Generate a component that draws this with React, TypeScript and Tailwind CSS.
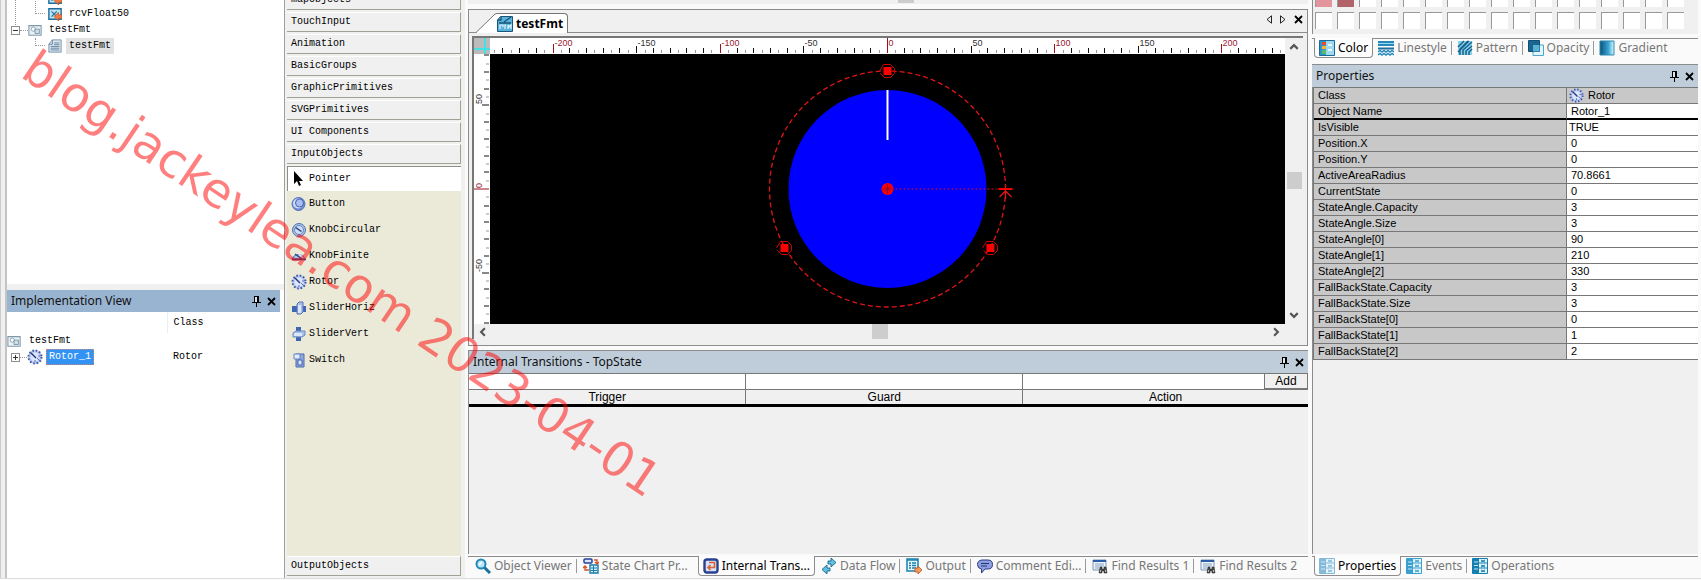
import { FC, ReactNode } from 'react';

interface IconProps {
  className?: string;
}

interface Tab {
  label: string;
  icon: ReactNode;
  active?: boolean;
  separator?: boolean;
}

const BitmapIcon: FC<IconProps & { children: ReactNode }> = ({ className = 'size-4', children }) => (
  <svg viewBox="0 0 16 16" className={`${className} shrink-0`} aria-hidden="true">
    {children}
  </svg>
);

const PinIcon = () => (
  <svg viewBox="0 0 9 11" className="h-[11px] w-[9px]" shapeRendering="crispEdges" aria-hidden="true">
    <path d="M2 0h5v6H2zM0 6h9v1H0zM4 7h1v4H4z" fill="#000" />
    <path d="M3 1h2v5H3z" fill="#dfe6ee" />
  </svg>
);

const CloseIcon = () => (
  <svg viewBox="0 0 9 9" className="size-[9px]" aria-hidden="true">
    <path d="M1 1l7 7M8 1l-7 7" stroke="#000" strokeWidth="1.8" />
  </svg>
);

const RotorIcon: FC<IconProps> = ({ className }) => (
  <BitmapIcon className={className}>
    <circle cx="8" cy="8" r="7" fill="#b9c8ee" />
    <circle cx="8" cy="8" r="6.5" fill="none" stroke="#3d55a4" strokeWidth="2" strokeDasharray="1.5 1.9" />
    <circle cx="8" cy="8" r="4.5" fill="#dce6fb" />
    <path d="M4 4l5 5" stroke="#22357e" strokeWidth="1.4" />
    <path d="M10 9l2 2M8 11v2M11 7h2" stroke="#5871bd" />
  </BitmapIcon>
);

const FormatIcon = () => (
  <BitmapIcon className="h-4 w-[14px]">
    <path d="M1 3h14v11H1z" fill="#e9f2f6" stroke="#7f99a9" strokeWidth="1.2" />
    <circle cx="6" cy="7" r="2.4" fill="#fff" stroke="#839eae" />
    <path d="M8 7h5v5H8z" fill="#cfe0e8" stroke="#7891a0" />
  </BitmapIcon>
);

const PageIcon = () => (
  <BitmapIcon className="h-4 w-[14px]">
    <path d="M5 1h10v14H1V6z" fill="#dbe6ef" stroke="#6e8aa3" />
    <path d="M1 6h4V1M3 8.500h10M3 10.500h10M3 12.500h10M7 4.500h6M7 6.500h6" fill="none" stroke="#5c7d9b" />
  </BitmapIcon>
);

const ReceiveIcon = () => (
  <BitmapIcon className="h-4 w-[14px]">
    <path d="M1 2h14v12H1z" fill="#bfe6f5" stroke="#1f6d9c" strokeWidth="1.6" />
    <path d="M4 5l6 6M10 5l-6 6" stroke="#1f6d9c" strokeWidth="1.4" />
    <path d="M7 11l5-5v3h4v4h-4v3z" fill="#ef7d42" stroke="#b4441a" strokeWidth=".7" />
  </BitmapIcon>
);

const PointerIcon = () => (
  <BitmapIcon>
    <path d="M3 0v13l3-3 2 5 2-1-2-4h4z" fill="#000" />
  </BitmapIcon>
);

const PushButtonIcon = () => (
  <BitmapIcon>
    <circle cx="7.500" cy="8" r="6.500" fill="#6d8bd0" stroke="#5672b8" />
    <circle cx="7" cy="7.500" r="5" fill="#cfdcf8" />
    <circle cx="8.500" cy="7" r="4" fill="#a9bfef" stroke="#4763b4" />
  </BitmapIcon>
);

const KnobCircularIcon = () => (
  <BitmapIcon>
    <circle cx="8" cy="8" r="6.500" fill="#a9c4ea" stroke="#4f74b4" />
    <circle cx="8" cy="8" r="4.500" fill="#cfdef6" stroke="#6688c3" />
    <path d="M4.500 5.500l6 4" stroke="#23407f" strokeWidth="1.5" />
  </BitmapIcon>
);

const KnobFiniteIcon = () => (
  <BitmapIcon>
    <path d="M1 11a7 7 0 0 1 13 0z" fill="#a8c3e9" stroke="#4f74b4" />
    <path d="M4 6l7 5M1 11.500h14" stroke="#2a4a8e" strokeWidth="1.4" />
    <path d="M8 6l4 4" stroke="#e4edfb" strokeWidth="1.5" />
  </BitmapIcon>
);

const SliderHorizIcon = () => (
  <BitmapIcon>
    <path d="M1 6h5v6H1zM12 6h3v6h-3z" fill="#3f66b0" />
    <path d="M6 4l2-2h4v10l-2 2H6z" fill="#a9c0ea" stroke="#5573b4" />
    <path d="M7 5h3v8H7z" fill="#dbe6f9" />
  </BitmapIcon>
);

const SliderVertIcon = () => (
  <BitmapIcon>
    <path d="M5 1h5v5H5zM5 11h5v4H5z" fill="#3f66b0" />
    <path d="M2 7l3-2h9v4l-3 2H2z" fill="#a9c0ea" stroke="#6a86c2" />
    <path d="M3 7h8v3H3z" fill="#dbe6f9" />
  </BitmapIcon>
);

const SwitchIcon = () => (
  <BitmapIcon>
    <path d="M5 2h8v13H5z" fill="#8da9de" stroke="#4c69ae" />
    <path d="M3 2h6v5H3z" fill="#e4ebfa" stroke="#6682c0" />
    <path d="M7 8h4v5H7z" fill="#dbe5f8" stroke="#4661a6" />
  </BitmapIcon>
);

const EditorIcon = () => (
  <BitmapIcon>
    <path d="M3.500.5h12v15H.5V4z" fill="#57b3dc" stroke="#1b5678" />
    <path d="M1 4h3V1M2 7h12M7 6l7-5" fill="none" stroke="#1b5678" strokeWidth="1.3" />
    <path d="M3 13v-4h3v2M8 13V9h1M11 13V9l1 2 2-2v4" fill="none" stroke="#e4f5fc" strokeWidth="1.2" />
  </BitmapIcon>
);

const SearchIcon = () => (
  <BitmapIcon>
    <path d="M9 9l6 6" stroke="#1a6f9e" strokeWidth="3" />
    <circle cx="6" cy="6" r="4.500" fill="#b8e7f8" stroke="#2388b4" strokeWidth="2" />
    <path d="M4 7l3-3" stroke="#fff" strokeWidth="1.4" />
  </BitmapIcon>
);

const StateChartIcon = () => (
  <BitmapIcon>
    <rect x="1" y="1" width="8" height="4" rx="1" fill="#dbe5fb" stroke="#25409a" strokeWidth="1.5" />
    <path d="M7 7h8v8H7z" fill="#d8f1fa" stroke="#187ba8" strokeWidth="1.4" />
    <path d="M8 10h6M8 12.500h6M10.500 8v7" stroke="#187ba8" />
    <path d="M11 2h3v3M12 4l2 2 2-2M6 12H2V9M0 10l2-2 2 2" fill="none" stroke="#da5426" strokeWidth="1.4" />
  </BitmapIcon>
);

const TransitionIcon = () => (
  <BitmapIcon>
    <rect x="1.500" y="1.500" width="13" height="13" rx="2.500" fill="#d9e2f9" stroke="#27418e" strokeWidth="2.400" />
    <path d="M6 4.500h5.500v5H5M7.500 7L5 9.500 7.500 12" fill="none" stroke="#d9622d" strokeWidth="1.600" />
  </BitmapIcon>
);

const DataFlowIcon = () => (
  <BitmapIcon>
    <path d="M7 3h3V0l5 4.500L10 9V6H7z" fill="#65bde0" stroke="#126791" strokeWidth=".9" />
    <path d="M9 10H6V7l-5 4.500L6 16v-3h3z" fill="#65bde0" stroke="#126791" strokeWidth=".9" />
  </BitmapIcon>
);

const OutputIcon = () => (
  <BitmapIcon>
    <path d="M1 1h11v12H1z" fill="#e5f6fc" stroke="#1a81ad" strokeWidth="1.500" />
    <path d="M1 2h11M3 5h2M6 5h4M3 7.500h2M6 7.500h4M3 10h2M6 10h4" stroke="#1a81ad" strokeWidth="1.400" />
    <path d="M9 10h3V8l4 4-4 4v-2H9z" fill="#f39a5d" stroke="#c2501f" strokeWidth=".8" />
  </BitmapIcon>
);

const CommentIcon = () => (
  <BitmapIcon>
    <path d="M5 2h6q4.500 0 4.500 4.500T11 11H8l-3.500 4v-4Q.5 10.500.5 6.500T5 2z" fill="#8e9fdf" stroke="#2b3f87" />
    <path d="M4 5.500h8M4 8h6" stroke="#22357a" strokeWidth="1.200" />
  </BitmapIcon>
);

const FindIcon = () => (
  <BitmapIcon>
    <path d="M1 2h13v10H1z" fill="#eef3fa" stroke="#7d96b5" />
    <path d="M1 3h13" stroke="#2a5da8" strokeWidth="2" />
    <path d="M3 6h9M3 8h9M3 10h4" stroke="#8aa4c4" />
    <path d="M8 9h2v2h2V9h2l1 6h-3v-2h-2v2H7z" fill="#494949" stroke="#222" strokeWidth=".5" />
    <path d="M8 13h1M13 13h1" stroke="#ddd" strokeWidth="1.500" />
  </BitmapIcon>
);

const ColorIcon = () => (
  <BitmapIcon>
    <path d="M.5.5h15v15H.5z" fill="#2f93c6" stroke="#1b6b99" />
    <path d="M7 1h8v14H7z" fill="#9fd9ef" />
    <path d="M3 2h4v3H3z" fill="#e34b37" />
    <path d="M3 6h4v3H3z" fill="#f4b63a" />
    <path d="M3 10h4v4H3z" fill="#5cba6c" />
    <path d="M9 4h4v2H9zM9 9h4v2H9z" fill="#e7f7fd" />
  </BitmapIcon>
);

const LinestyleIcon = () => (
  <BitmapIcon>
    <path d="M0 1h16v5H0z" fill="#2589bb" />
    <path d="M0 3.500h16" stroke="#9bd8ee" />
    <path d="M0 8.500h16" stroke="#1d6f9d" strokeWidth="2" />
    <path
      d="M0 12l2-1.500 2 1.500 2-1.500 2 1.500 2-1.500 2 1.500 2-1.500 2 1.500M0 15l2-1.500 2 1.500 2-1.500 2 1.500 2-1.500 2 1.500 2-1.500 2 1.500"
      fill="none"
      stroke="#2589bb"
      strokeWidth="1.500"
    />
  </BitmapIcon>
);

const PatternIcon = () => (
  <BitmapIcon>
    <path d="M1 1h14v14H1z" fill="#8ecfe8" />
    <path d="M1 7l6-6M1 12L12 1M3 15V9l8-8M6 15v-5l9-8M9 15v-4l6-5M12 15v-3l3-3" fill="none" stroke="#14648f" strokeWidth="1.500" />
  </BitmapIcon>
);

const OpacityIcon = () => (
  <BitmapIcon>
    <path d="M5 5h10.500v10.500H5z" fill="#e4f6fc" stroke="#4ba8cd" />
    <path d="M.5.5h11v11H.5z" fill="#1a6591" stroke="#134f73" />
    <path d="M5 5h6.500v6.500H5z" fill="#58b3d6" />
  </BitmapIcon>
);

const GradientIcon = () => (
  <BitmapIcon>
    <defs>
      <linearGradient id="blue-fade">
        <stop offset="0" stopColor="#0c4f78" />
        <stop offset=".6" stopColor="#35a5d3" />
        <stop offset="1" stopColor="#e6f7fd" />
      </linearGradient>
    </defs>
    <path d="M1 1h14v14H1z" fill="url(#blue-fade)" stroke="#2f87b0" />
  </BitmapIcon>
);

const GridIcon: FC<{ tint: 'pale' | 'mid' | 'strong' }> = ({ tint }) => {
  const color = { pale: '#86b9d9', mid: '#399fce', strong: '#137fb0' }[tint];
  return (
    <BitmapIcon>
      <path d="M.5.5h15v15H.5z" fill="#e5f5fb" stroke={color} />
      <path d="M1 1h6v14H1z" fill={color} />
      <path d="M7 5h8M7 10h8" stroke={color} />
      <path d="M2 4h4M2 7.500h4M2 11h4" stroke="#c6e8f5" />
      <path d="M9 2l4 2M13 2L9 4M9 7l4 2M13 7L9 9M9 12l4 2M13 12l-4 2" stroke={color} />
    </BitmapIcon>
  );
};

const TreeToggle: FC<{ collapsed?: boolean }> = ({ collapsed }) => (
  <button type="button" aria-label={collapsed ? 'Expand' : 'Collapse'} className="shrink-0">
    <svg viewBox="0 0 9 9" className="size-[9px]" shapeRendering="crispEdges" aria-hidden="true">
      <path d="M.5.5h8v8h-8z" fill="#fff" stroke="#8f8f8f" />
      <path d={collapsed ? 'M2 4.500h5M4.500 2v5' : 'M2 4.500h5'} stroke="#333" />
    </svg>
  </button>
);

const PanelHeader: FC<{ title: string; className: string }> = ({ title, className }) => (
  <header className={`flex shrink-0 items-center gap-1.5 px-1 text-[#111] ${className}`}>
    <h2 className="flex-1 text-xs">{title}</h2>
    <button type="button" aria-label="Auto hide">
      <PinIcon />
    </button>
    <button type="button" aria-label="Close">
      <CloseIcon />
    </button>
  </header>
);

const TabStrip: FC<{ tabs: Tab[]; className: string }> = ({ tabs, className }) => (
  <nav className={`flex h-[22px] shrink-0 border-t border-[#8c8c8c] bg-[#fafafa] ${className}`}>
    {tabs.map(({ label, icon, active, separator }) => (
      <button
        key={label}
        type="button"
        className={`-mt-px flex h-5 items-center gap-[3px] text-xs whitespace-nowrap ${
          active ? 'rounded-b border-x border-b border-[#8c8c8c] bg-[#fdfdfd] px-1 text-black' : 'pl-[5px] text-[#777]'
        } ${active || separator ? '' : 'pr-[9px]'}`}
      >
        {icon}
        <span>{label}</span>
        {separator && <span className="ml-px h-3.5 w-px bg-[#999]" />}
      </button>
    ))}
  </nav>
);

const SolutionTree = () => (
  <section className="h-[284px] shrink-0 overflow-hidden bg-white">
    <ul className="relative -mt-[10px] pl-1">
      <li className="flex h-4 items-center gap-[7px] pl-[37px]">
        <ReceiveIcon />
        <span>sndFloat50</span>
      </li>
      <li className="flex h-4 items-center gap-[7px] pl-[37px]">
        <ReceiveIcon />
        <span>rcvFloat50</span>
      </li>
      <li className="flex h-4 items-center">
        <TreeToggle />
        <span className="w-2 border-t border-dotted border-[#999]" />
        <FormatIcon />
        <span className="pl-[7px]">testFmt</span>
      </li>
      <li className="flex h-4 items-center pl-[37px]">
        <PageIcon />
        <span className="ml-1 bg-[#e2e2e2] px-[3px] leading-4">testFmt</span>
      </li>
      <li aria-hidden="true">
        <span className="absolute top-0 left-2 h-[35px] border-l border-dotted border-[#999]" />
        <span className="absolute top-0 left-7 h-6 w-2.5 border-b border-l border-dotted border-[#999]" />
        <span className="absolute top-12 left-7 h-2 w-2.5 border-b border-l border-dotted border-[#999]" />
      </li>
    </ul>
  </section>
);

const ImplementationView = () => (
  <section className="mt-1.5 flex flex-1 flex-col bg-white">
    <PanelHeader title="Implementation View" className="mr-1 h-[22px] bg-[#99b4d1] font-[Noto_Sans,sans-serif]" />
    <table className="mr-1 w-auto table-fixed text-left">
      <thead>
        <tr className="h-[21px]">
          <th className="w-[160px] border-r border-[#e8eef4] font-normal" />
          <th className="pl-1.5 font-normal">Class</th>
        </tr>
      </thead>
      <tbody>
        <tr className="h-4">
          <td>
            <span className="flex items-center gap-2">
              <FormatIcon />
              testFmt
            </span>
          </td>
          <td />
        </tr>
        <tr className="h-4">
          <td>
            <span className="flex items-center pl-1">
              <TreeToggle collapsed />
              <span className="w-[7px] border-t border-dotted border-[#999]" />
              <RotorIcon className="size-4" />
              <span className="ml-[3px] border border-dotted border-[#c87] bg-[#3393f5] px-0.5 leading-3.5 text-white">
                Rotor_1
              </span>
            </span>
          </td>
          <td className="pl-1.5">Rotor</td>
        </tr>
      </tbody>
    </table>
  </section>
);

const toolGroups = [
  'mapObjects',
  'TouchInput',
  'Animation',
  'BasicGroups',
  'GraphicPrimitives',
  'SVGPrimitives',
  'UI Components',
  'InputObjects',
];

const tools = [
  { label: 'Pointer', icon: <PointerIcon />, active: true },
  { label: 'Button', icon: <PushButtonIcon /> },
  { label: 'KnobCircular', icon: <KnobCircularIcon /> },
  { label: 'KnobFinite', icon: <KnobFiniteIcon /> },
  { label: 'Rotor', icon: <RotorIcon /> },
  { label: 'SliderHoriz', icon: <SliderHorizIcon /> },
  { label: 'SliderVert', icon: <SliderVertIcon /> },
  { label: 'Switch', icon: <SwitchIcon /> },
];

const ToolGroup: FC<{ label: string }> = ({ label }) => (
  <button
    type="button"
    className="mb-0.5 block h-5 w-full shrink-0 border-t border-r border-b border-t-white border-r-[#a0a095] border-b-[#a0a095] bg-[#f0f0f0] pl-1 text-left"
  >
    {label}
  </button>
);

const Toolbox = () => (
  <aside className="flex w-[181px] shrink-0 flex-col overflow-hidden border-l border-[#a0a0a0] bg-[#f0f0ee] pr-1 pl-0.5">
    <div className="-mt-[10px] flex shrink-0 flex-col">
      {toolGroups.map((label) => (
        <ToolGroup key={label} label={label} />
      ))}
    </div>
    <div className="flex-1 bg-[#ebead9]">
      {tools.map(({ label, icon, active }) => (
        <button
          key={label}
          type="button"
          className={`flex w-full items-center gap-0.5 ${
            active ? 'h-[25px] border-t border-l border-[#8f8f86] bg-white pl-[3px]' : 'h-[26px] pl-1'
          }`}
        >
          {icon}
          {label}
        </button>
      ))}
    </div>
    <ToolGroup label="OutputObjects" />
  </aside>
);

// pixels per drawing unit
const SCALE = 1.672;
const tickValues = Array.from({ length: 161 }, (_, i) => (i - 80) * 5);

const tickLength = (value: number) => {
  if (value === 0) return 16;
  if (value % 100 === 0) return 9;
  if (value % 50 === 0) return 7;
  return value % 10 === 0 ? 5 : 3;
};

const tickColor = (value: number) => {
  if (value % 100 === 0) return '#9b0f1f';
  return value % 10 === 0 ? '#111' : '#999';
};

const labelColor = (value: number) => (value % 100 === 0 ? '#9b2035' : '#333');

const HorizontalRuler = () => (
  <svg className="h-4 min-w-0 flex-1 bg-white font-[Liberation_Sans,sans-serif]" aria-hidden="true">
    <svg x="50%" overflow="visible">
      {tickValues.map((value) => {
        const x = Math.round(value * SCALE);
        return (
          <g key={value}>
            <path d={`M${x} 15v-${tickLength(value)}`} stroke={tickColor(value)} />
            {value % 50 === 0 && Math.abs(value) <= 200 && (
              <text x={x + 1} y="8" fontSize="9" fill={labelColor(value)}>
                {value}
              </text>
            )}
          </g>
        );
      })}
    </svg>
  </svg>
);

const VerticalRuler = () => (
  <svg className="h-full w-4 shrink-0 bg-white font-[Liberation_Sans,sans-serif]" aria-hidden="true">
    <svg y="50%" overflow="visible">
      {tickValues.map((value) => {
        const y = Math.round(-value * SCALE);
        return (
          <g key={value}>
            <path d={`M15 ${y}h-${tickLength(value)}`} stroke={tickColor(value)} />
            {value % 50 === 0 && Math.abs(value) <= 50 && (
              <text transform={`translate(8 ${y - 1}) rotate(-90)`} fontSize="9" fill={labelColor(value)}>
                {value}
              </text>
            )}
          </g>
        );
      })}
    </svg>
  </svg>
);

const Handle: FC<{ x: number; y: number }> = ({ x, y }) => (
  <g transform={`translate(${x} ${y})`}>
    <path d="M-8 0l4-6.500h7l4 4v5l-4 4h-6l-4-4" fill="none" stroke="#d40000" />
    <path d="M-4-4h8v8h-8z" fill="#f00" />
  </g>
);

const RotorCanvas = () => (
  <svg className="h-full min-w-0 flex-1 bg-black" role="img" aria-label="Rotor_1">
    <svg x="50%" y="50%" overflow="visible">
      <circle r="99" fill="#00f" />
      <circle r="118" fill="none" stroke="#e01515" strokeWidth="1.300" strokeDasharray="5 3" />
      <path d="M0-99v50" stroke="#fff" strokeWidth="2" />
      <path d="M0 0h118" stroke="#c01030" strokeDasharray="2 2" />
      <circle r="6" fill="#f00" />
      <path d="M-3-3l6 6M3-3l-6 6M0-5V5M-5 0H5" stroke="#8c0a30" strokeWidth=".8" />
      <path d="M111 0h14" stroke="#f00" strokeWidth="2" />
      <path d="M112 8l6-6 6 6M118 2v8" fill="none" stroke="#e01515" strokeWidth="1.300" />
      <Handle x={0} y={-118} />
      <Handle x={-103} y={59} />
      <Handle x={103} y={59} />
    </svg>
  </svg>
);

const Chevron: FC<IconProps> = ({ className = '' }) => (
  <svg viewBox="0 0 8 8" className={`size-2.5 ${className}`} aria-hidden="true">
    <path d="M1 5.500l3-3 3 3" fill="none" stroke="#555" strokeWidth="1.700" />
  </svg>
);

const Editor = () => (
  <section className="shrink-0 border border-[#8c8c8c] bg-[#f0f0f0] pb-1.5">
    <div className="flex h-[23px] items-end border-b border-[#8c8c8c]">
      <button type="button" className="-mb-px flex h-5 items-center text-xs font-bold">
        <svg viewBox="0 0 21 20" className="ml-[7px] h-5 w-[21px]" aria-hidden="true">
          <path d="M0 20L17 3q2-2.500 4-2.500V20z" fill="#fff" />
          <path d="M0 19.500L17 3q2-2.500 4-2.500" fill="none" stroke="#777" />
        </svg>
        <span className="flex h-full items-center gap-[3px] rounded-tr border-t border-r border-[#777] bg-white pr-1">
          <EditorIcon />
          testFmt
        </span>
      </button>
      <div className="mb-2 ml-auto flex items-center gap-2 pr-1">
        <button type="button" aria-label="Previous">
          <svg viewBox="0 0 6 9" className="h-[9px] w-1.5" aria-hidden="true">
            <path d="M5.500.8v7.400L1 4.500z" fill="none" stroke="#222" />
          </svg>
        </button>
        <button type="button" aria-label="Next">
          <svg viewBox="0 0 6 9" className="h-[9px] w-1.5" aria-hidden="true">
            <path d="M.5.8v7.400L5 4.500z" fill="none" stroke="#222" />
          </svg>
        </button>
        <button type="button" aria-label="Close">
          <CloseIcon />
        </button>
      </div>
    </div>
    <div className="mt-[3px] mr-1 ml-[3px] border-t-2 border-l-2 border-[#777]">
      <div className="flex">
        <div className="min-w-0 flex-1">
          <div className="flex bg-white">
            <svg viewBox="0 0 16 16" className="size-4 shrink-0 bg-[#bbb]" aria-hidden="true">
              <path d="M11 0v16M0 11h16" stroke="#1fecf2" strokeWidth="1.500" />
            </svg>
            <HorizontalRuler />
          </div>
          <div className="flex h-[270px]">
            <VerticalRuler />
            <RotorCanvas />
          </div>
        </div>
        <div className="flex w-[18px] shrink-0 flex-col items-center py-1">
          <Chevron />
          <span className="h-[120px]" />
          <span className="h-[17px] w-[15px] bg-[#cdcdcd]" />
          <Chevron className="mt-auto rotate-180" />
        </div>
      </div>
      <div className="flex h-[15px] items-center pr-[22px] pl-1">
        <Chevron className="-rotate-90" />
        <span className="mx-auto h-[15px] w-4 bg-[#cdcdcd]" />
        <Chevron className="rotate-90" />
      </div>
    </div>
  </section>
);

const InternalTransitions = () => (
  <section className="mt-1 flex flex-1 flex-col border-t border-l border-[#8c8c8c] bg-[#f0f0f0]">
    <PanelHeader title="Internal Transitions - TopState" className="h-[22px] bg-[#bfcddb]" />
    <table className="w-full table-fixed border-t border-b-[3px] border-t-[#777] border-b-black font-[Liberation_Sans,sans-serif] text-xs">
      <tbody>
        <tr className="h-4 bg-white">
          <td className="w-[33%] border-r border-b border-[#777]">
            <input aria-label="Trigger" className="block h-[15px] w-full px-1 outline-none" />
          </td>
          <td className="w-[33%] border-r border-b border-[#777]">
            <input aria-label="Guard" className="block h-[15px] w-full px-1 outline-none" />
          </td>
          <td className="border-b border-[#777]">
            <div className="flex">
              <input aria-label="Action" className="block h-[15px] min-w-0 flex-1 px-1 outline-none" />
              <button
                type="button"
                className="h-[15px] w-11 border-r border-b border-l border-[#777] bg-[#f0f0f0] leading-3.5"
              >
                Add
              </button>
            </div>
          </td>
        </tr>
        <tr className="h-3.5 leading-3.5">
          <th className="border-r border-[#777] font-normal">Trigger</th>
          <th className="border-r border-[#777] font-normal">Guard</th>
          <th className="font-normal">Action</th>
        </tr>
      </tbody>
    </table>
  </section>
);

const viewTabs: Tab[] = [
  { label: 'Object Viewer', icon: <SearchIcon />, separator: true },
  { label: 'State Chart Pr...', icon: <StateChartIcon /> },
  { label: 'Internal Trans...', icon: <TransitionIcon />, active: true },
  { label: 'Data Flow', icon: <DataFlowIcon />, separator: true },
  { label: 'Output', icon: <OutputIcon />, separator: true },
  { label: 'Comment Edi...', icon: <CommentIcon />, separator: true },
  { label: 'Find Results 1', icon: <FindIcon />, separator: true },
  { label: 'Find Results 2', icon: <FindIcon /> },
];

const styleTabs: Tab[] = [
  { label: 'Color', icon: <ColorIcon />, active: true },
  { label: 'Linestyle', icon: <LinestyleIcon />, separator: true },
  { label: 'Pattern', icon: <PatternIcon />, separator: true },
  { label: 'Opacity', icon: <OpacityIcon />, separator: true },
  { label: 'Gradient', icon: <GradientIcon /> },
];

const inspectorTabs: Tab[] = [
  { label: 'Properties', icon: <GridIcon tint="pale" />, active: true },
  { label: 'Events', icon: <GridIcon tint="mid" />, separator: true },
  { label: 'Operations', icon: <GridIcon tint="strong" /> },
];

const properties = [
  ['IsVisible', 'TRUE'],
  ['Position.X', '0'],
  ['Position.Y', '0'],
  ['ActiveAreaRadius', '70.8661'],
  ['CurrentState', '0'],
  ['StateAngle.Capacity', '3'],
  ['StateAngle.Size', '3'],
  ['StateAngle[0]', '90'],
  ['StateAngle[1]', '210'],
  ['StateAngle[2]', '330'],
  ['FallBackState.Capacity', '3'],
  ['FallBackState.Size', '3'],
  ['FallBackState[0]', '0'],
  ['FallBackState[1]', '1'],
  ['FallBackState[2]', '2'],
];

const swatches = Array.from({ length: 34 }, (_, i) => i);

const swatchColor = (index: number) => {
  if (index === 0) return 'bg-[#e2959c]';
  if (index === 1) return 'bg-[#b16369]';
  return 'bg-white';
};

const ColorPalette = () => (
  <div className="h-[34px] shrink-0 overflow-hidden border-l border-[#8c8c8c] bg-[#f0f0f0]">
    <div className="-mt-2.5 grid grid-cols-[repeat(17,17px)] gap-[5px] pl-0.5">
      {swatches.map((index) => (
        <button
          key={index}
          type="button"
          aria-label={`Swatch ${index + 1}`}
          className={`h-[17px] border-t border-l border-[#999] ${swatchColor(index)}`}
        />
      ))}
    </div>
  </div>
);

const PropertyTable = () => (
  <table className="w-full table-fixed border-separate border-spacing-0 border-t border-l border-[#777] text-left font-[Liberation_Sans,sans-serif] text-[11px] leading-[15px]">
    <tbody>
      <tr className="bg-[#c8c8c8]">
        <th className="w-[253px] border-r border-b border-[#777] pl-1 font-normal">Class</th>
        <td className="border-b border-[#777]">
          <span className="flex h-[15px] items-center gap-1 pl-0.5">
            <RotorIcon className="size-[15px]" />
            Rotor
          </span>
        </td>
      </tr>
      <tr className="leading-3.5">
        <th className="border-r border-b-2 border-r-[#777] border-b-black bg-[#c8c8c8] pl-1 font-normal">
          Object Name
        </th>
        <td className="border-b-2 border-black bg-white pl-1">Rotor_1</td>
      </tr>
      {properties.map(([name, value]) => (
        <tr key={name}>
          <th className="border-r border-b border-[#777] bg-[#c8c8c8] pl-1 font-normal">{name}</th>
          <td className={`border-b border-[#777] bg-white ${value === 'TRUE' ? 'pl-0.5' : 'pl-1'}`}>{value}</td>
        </tr>
      ))}
    </tbody>
  </table>
);

const App: FC = () => {
  return (
    <div className="relative flex h-screen min-h-[580px] flex-col overflow-hidden bg-[#fafafa] font-[Noto_Sans,sans-serif] text-xs text-black">
      <main className="mb-px flex min-h-0 flex-1 border-b border-[#ddd]">
        <div className="flex w-[284px] shrink-0 flex-col border-l border-[#ccc] bg-[#f0f0f0] pl-1 font-[Liberation_Mono,monospace] text-[10px]">
          <div className="flex flex-1 flex-col border-l-2 border-[#c4c4c4]">
            <SolutionTree />
            <ImplementationView />
          </div>
        </div>

        <div className="flex shrink-0 font-[Liberation_Mono,monospace] text-[10px]">
          <Toolbox />
        </div>

        <div className="flex min-w-0 flex-1 flex-col pr-1 pl-[3px]">
          <div className="mb-[5px] h-1 shrink-0 bg-[#f0f0f0] pl-9">
            <span className="mx-auto block h-[3px] w-4 bg-[#cdcdcd]" />
          </div>
          <Editor />
          <InternalTransitions />
          <TabStrip tabs={viewTabs} className="mt-0.5 gap-px pl-0.5" />
        </div>

        <div className="flex w-[389px] shrink-0 flex-col pr-[3px]">
          <ColorPalette />
          <TabStrip tabs={styleTabs} className="mt-1 pl-0.5" />
          <PanelHeader title="Properties" className="mt-1 h-[23px] border-t border-[#8c8c8c] bg-[#bfcddb]" />
          <div className="flex-1 border-l border-[#8c8c8c] bg-[#f0f0f0]">
            <PropertyTable />
          </div>
          <TabStrip tabs={inspectorTabs} className="mt-0.5 pl-0.5" />
        </div>
      </main>

      <p className="pointer-events-none absolute top-[42px] left-[42px] origin-top-left rotate-[34deg] font-[DejaVu_Sans,sans-serif] text-[48px] leading-none whitespace-nowrap text-[#ff0000]/50">
        blog.jackeylea.com 2023-04-01
      </p>
    </div>
  );
};

export default App;
